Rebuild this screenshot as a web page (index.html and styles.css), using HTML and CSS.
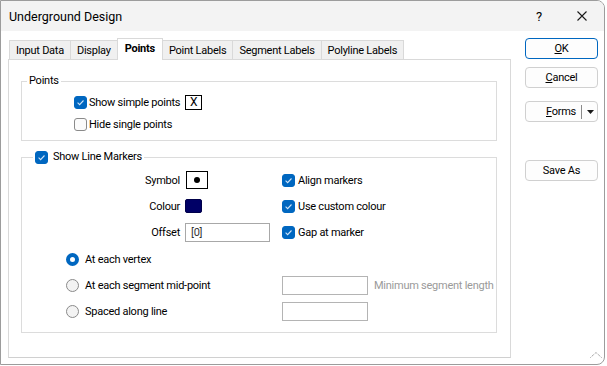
FILE: index.html
```html
<!DOCTYPE html>
<html>
<head>
<meta charset="utf-8">
<link rel="stylesheet" href="styles.css">
</head>
<body>
<div class="window">
  <div class="titlebar">
    <span class="title">Underground Design</span>
    <span class="help">?</span>
    <span class="close"><svg width="10" height="10" viewBox="0 0 10 10"><path d="M0.5 0.5 L9.5 9.5 M9.5 0.5 L0.5 9.5" stroke="#1a1a1a" stroke-width="1.1" fill="none"/></svg></span>
  </div>
  <div class="body">
    <div class="main">
      <div class="tabs">
        <div class="tab">Input Data</div>
        <div class="tab">Display</div>
        <div class="tab active">Points</div>
        <div class="tab">Point Labels</div>
        <div class="tab">Segment Labels</div>
        <div class="tab">Polyline Labels</div>
      </div>
      <div class="panel">
        <fieldset class="group points">
          <legend class="legend">Points</legend>
          <div class="prow">
            <span class="cb on"><svg width="13" height="13" viewBox="0 0 13 13"><polyline points="3.6,6.7 5.6,8.6 9.5,4.5" fill="none" stroke="#cfe3f7" stroke-width="1.1"/></svg></span>
            <span class="cbtext">Show simple points</span>
            <span class="xbox">X</span>
          </div>
          <div class="prow">
            <span class="cb"></span>
            <span class="cbtext">Hide single points</span>
          </div>
        </fieldset>
        <fieldset class="group markers">
          <legend class="legend mlegend">
            <span class="cb on"><svg width="13" height="13" viewBox="0 0 13 13"><polyline points="3.6,6.7 5.6,8.6 9.5,4.5" fill="none" stroke="#cfe3f7" stroke-width="1.1"/></svg></span>
            <span class="cbtext">Show Line Markers</span>
          </legend>
          <div class="mgrid">
            <span class="lbl">Symbol</span>
            <span class="ctl"><span class="symbol"><span class="dot"></span></span></span>
            <span class="rchk"><span class="cb on"><svg width="13" height="13" viewBox="0 0 13 13"><polyline points="3.6,6.7 5.6,8.6 9.5,4.5" fill="none" stroke="#cfe3f7" stroke-width="1.1"/></svg></span><span class="cbtext">Align markers</span></span>

            <span class="lbl">Colour</span>
            <span class="ctl"><span class="swatch"></span></span>
            <span class="rchk"><span class="cb on"><svg width="13" height="13" viewBox="0 0 13 13"><polyline points="3.6,6.7 5.6,8.6 9.5,4.5" fill="none" stroke="#cfe3f7" stroke-width="1.1"/></svg></span><span class="cbtext">Use custom colour</span></span>

            <span class="lbl">Offset</span>
            <span class="ctl"><span class="input offset">[0]</span></span>
            <span class="rchk"><span class="cb on"><svg width="13" height="13" viewBox="0 0 13 13"><polyline points="3.6,6.7 5.6,8.6 9.5,4.5" fill="none" stroke="#cfe3f7" stroke-width="1.1"/></svg></span><span class="cbtext">Gap at marker</span></span>
          </div>
          <div class="radios">
            <div class="rrow">
              <span class="rlabel"><span class="rb on"></span><span class="cbtext">At each vertex</span></span>
            </div>
            <div class="rrow">
              <span class="rlabel"><span class="rb"></span><span class="cbtext">At each segment mid-point</span></span>
              <span class="input dis"></span>
              <span class="hint">Minimum segment length</span>
            </div>
            <div class="rrow">
              <span class="rlabel"><span class="rb"></span><span class="cbtext">Spaced along line</span></span>
              <span class="input dis"></span>
            </div>
          </div>
        </fieldset>
      </div>
    </div>
    <div class="buttons">
      <div class="btn ok"><span><u>O</u>K</span></div>
      <div class="btn cancel"><span><u>C</u>ancel</span></div>
      <div class="btn forms"><span class="ftext"><u>F</u>orms</span><span class="fsep"></span><svg width="7" height="4" viewBox="0 0 7 4"><path d="M0 0 H7 L3.5 4 Z" fill="#1a1a1a"/></svg></div>
      <div class="btn saveas"><span>Save As</span></div>
    </div>
  </div>
  <svg class="grip" width="12" height="6" viewBox="0 0 12 6"><polyline points="0.5,5.5 6,0.5 11.5,5.5" fill="none" stroke="#808080" stroke-width="1" stroke-dasharray="1 1"/></svg>
</div>
</body>
</html>
```
FILE: styles.css
```css
* { box-sizing: border-box; }
html, body { margin: 0; padding: 0; background: #ffffff; }
body {
  font-family: Roboto, "Liberation Sans", sans-serif;
  font-size: 11px;
  letter-spacing: -0.25px;
  color: #000;
  width: 607px;
  height: 366px;
  overflow: hidden;
}
.window {
  position: relative;
  width: 605px;
  height: 365px;
  border: 1px solid #9c9c9c;
  border-radius: 0 8px 8px 0;
  background: #ffffff;
  overflow: hidden;
  display: flex;
  flex-direction: column;
}
.titlebar {
  height: 30px;
  background: #f3f3f3;
  display: flex;
  align-items: center;
  padding-left: 8px;
  flex: none;
}
.title { flex: 1; font-size: 12.5px; letter-spacing: 0; }
.help { width: 10px; margin-right: 31px; font-size: 13px; }
.close { width: 10px; height: 10px; margin-right: 17px; display: flex; }
.body {
  display: flex;
  padding: 7px 0 0 7px;
  flex: 1;
}
.main { width: 503px; display: flex; flex-direction: column; }
.tabs {
  display: flex;
  align-items: flex-end;
  height: 21px;
  padding-left: 1px;
}
.tab {
  height: 19px;
  padding: 0 6px;
  border: 1px solid #d9d9d9;
  border-bottom: none;
  background: #f0f0f0;
  margin-right: -1px;
  display: flex;
  align-items: center;
  white-space: nowrap;
}
.tab.active {
  height: 22px;
  background: #ffffff;
  font-weight: bold;
  margin-bottom: -1px;
  position: relative;
  z-index: 1;
  padding: 0 7px 2px;
}
.panel {
  height: 299px;
  border: 1px solid #d9d9d9;
  border-bottom-color: #d0d0d0;
  background: #fff;
  padding: 13px 13px 0 12px;
}
.group {
  margin: 0;
  padding: 0;
  border: 1px solid #dcdcdc;
  min-width: 0;
}
.legend {
  padding: 0 2px;
  margin-left: 5px;
  height: 16px;
  line-height: 16px;
}
.points { padding: 2px 0 5px 0; }
.prow { height: 22px; display: flex; align-items: center; padding-left: 52px; }
.cb {
  width: 13px;
  height: 13px;
  border-radius: 3px;
  border: 1px solid #8a8a8a;
  background: #fbfbfb;
  flex: none;
  display: inline-flex;
}
.cb.on { background: #0067c0; border-color: #0067c0; }
.cb.on svg { margin: -1px; }
.cbtext { margin-left: 2px; white-space: nowrap; }
.xbox {
  margin-left: 5px;
  width: 17px;
  height: 15px;
  border: 1px solid #000;
  display: flex;
  align-items: center;
  justify-content: center;
  font-size: 12px;
  letter-spacing: 0;
}
.markers { margin-top: 8px; padding: 0 0 8px 0; }
.mlegend {
  margin-left: 11px;
  display: flex;
  align-items: center;
}
.mlegend .cbtext { margin-left: 5px; }
.mgrid {
  margin-top: 2px;
  display: grid;
  grid-template-columns: 163px 90px 1fr;
  grid-auto-rows: 26px;
}
.lbl { text-align: right; align-self: center; padding-right: 5px; }
.ctl { display: flex; align-items: center; }
.rchk { display: flex; align-items: center; padding-left: 7px; }
.rchk .cbtext { margin-left: 3px; }
.symbol {
  margin-left: 1px;
  width: 22px;
  height: 18px;
  border: 1px solid #000;
  display: flex;
  align-items: center;
  justify-content: center;
}
.dot { width: 6px; height: 6px; border-radius: 50%; background: #000; }
.swatch {
  width: 17px;
  height: 14px;
  border-radius: 2px;
  background: #000066;
  border: 1px solid #00004a;
}
.input {
  height: 19px;
  border: 1px solid #a8a8a8;
  display: flex;
  align-items: center;
  padding-left: 5px;
  color: #333;
  flex: none;
}
.offset { width: 85px; }
.radios { margin-top: 1px; padding-left: 44px; }
.rrow { height: 26px; display: flex; align-items: center; }
.rlabel { width: 216px; flex: none; display: flex; align-items: center; }
.rlabel .cbtext { margin-left: 6px; }
.rb {
  width: 13px;
  height: 13px;
  border-radius: 50%;
  border: 1px solid #8a8a8a;
  background: #f3f3f3;
  flex: none;
}
.rb.on {
  background: #ffffff;
  border: 4px solid #0067c0;
}
.input.dis { width: 86px; border-color: #b4b4b4; }
.hint { margin-left: 6px; color: #9a9a9a; white-space: nowrap; }
.buttons {
  margin-left: 14px;
  width: 73px;
  display: flex;
  flex-direction: column;
}
.btn {
  height: 21px;
  border: 1px solid #d0d0d0;
  border-radius: 4px;
  background: #fdfdfd;
  display: flex;
  align-items: center;
  justify-content: center;
}
.btn.ok { border-color: #0067c0; }
.btn.cancel { margin-top: 8px; }
.btn.forms { margin-top: 13px; justify-content: flex-start; padding-left: 20px; }
.ftext { width: 29px; white-space: nowrap; }
.fsep { width: 1px; height: 14px; background: #8a8a8a; margin: 0 5px 0 6px; }
.btn.saveas { margin-top: 38px; }
.grip { position: absolute; right: 2px; bottom: 6px; }
```
